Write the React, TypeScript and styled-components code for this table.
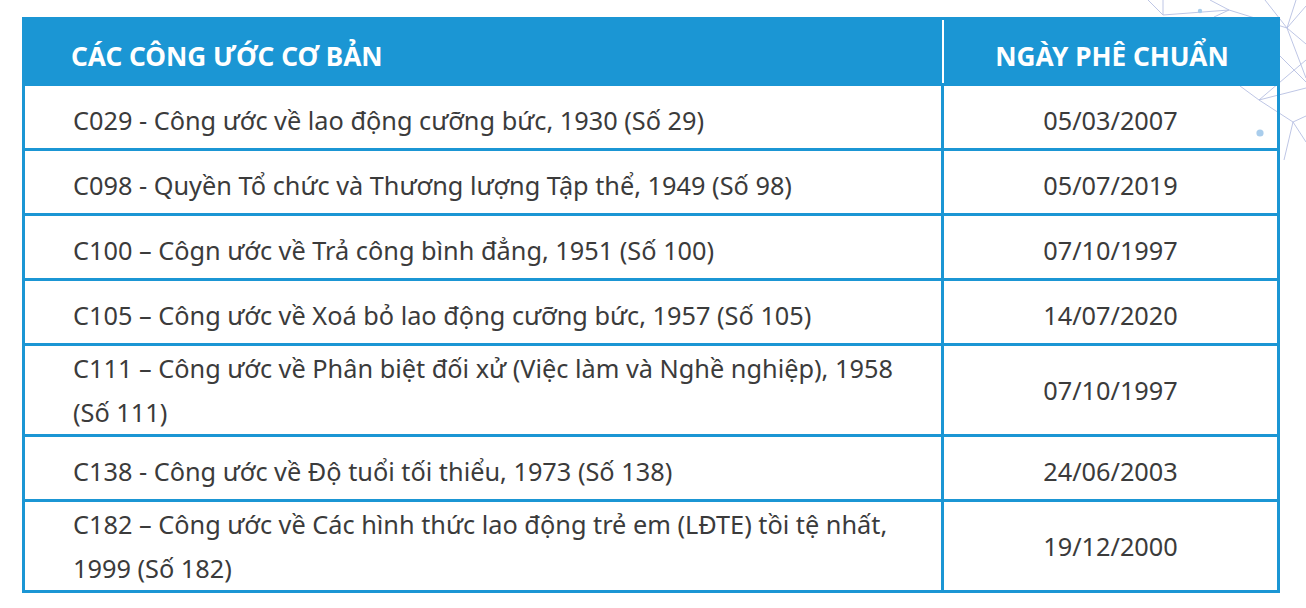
import styled, { createGlobalStyle } from 'styled-components';

const GlobalStyle = createGlobalStyle`
  html, body {
    margin: 0;
    padding: 0;
    background: #fff;
  }
  body {
    font-family: 'Noto Sans', 'Liberation Sans', sans-serif;
  }
  * {
    box-sizing: border-box;
  }
`;

const BLUE = '#1b96d4';

const Page = styled.div`
  position: relative;
  width: 1306px;
  height: 608px;
  overflow: hidden;
  padding: 17px 0 0 22px;
`;

const Network = styled.svg`
  position: absolute;
  top: 0;
  right: 0;
  width: 200px;
  height: 160px;
`;

const Table = styled.table`
  position: relative;
  width: 1258px;
  border-collapse: separate;
  border-spacing: 0;
  table-layout: fixed;
`;

const HeadCell = styled.th<{ $center?: boolean; $divider?: boolean }>`
  position: relative;
  height: 69px;
  padding: 8px 0 0 ${(p) => (p.$center ? '0' : '49px')};
  background: ${BLUE};
  color: #fff;
  font-size: 26.2px;
  font-weight: 700;
  text-align: ${(p) => (p.$center ? 'center' : 'left')};
  vertical-align: middle;

  &::after {
    content: '';
    display: ${(p) => (p.$divider ? 'block' : 'none')};
    position: absolute;
    top: 3px;
    bottom: 3px;
    right: 0;
    width: 2px;
    background: #fff;
  }
`;

const Cell = styled.td<{ $center?: boolean; $wrap?: boolean }>`
  height: 65px;
  padding: ${(p) => (p.$wrap ? '1px' : '8px')} ${(p) => (p.$center ? '0' : '30px')} 0
    ${(p) => (p.$center ? '0' : '48px')};
  border-bottom: 3px solid ${BLUE};
  border-right: 3px solid ${BLUE};
  color: #3b3b3b;
  font-size: 25.3px;
  line-height: 43.5px;
  text-align: ${(p) => (p.$center ? 'center' : 'left')};
  vertical-align: middle;

  &:first-child {
    border-left: 3px solid ${BLUE};
  }
`;

const rows = [
  { name: 'C029 - Công ước về lao động cưỡng bức, 1930 (Số 29)', date: '05/03/2007' },
  { name: 'C098 - Quyền Tổ chức và Thương lượng Tập thể, 1949 (Số 98)', date: '05/07/2019' },
  { name: 'C100 – Côgn ước về Trả công bình đẳng, 1951 (Số 100)', date: '07/10/1997' },
  { name: 'C105 – Công ước về Xoá bỏ lao động cưỡng bức, 1957 (Số 105)', date: '14/07/2020' },
  {
    name: 'C111 – Công ước về Phân biệt đối xử (Việc làm và Nghề nghiệp), 1958 (Số 111)',
    date: '07/10/1997',
    wrap: true,
  },
  { name: 'C138 - Công ước về Độ tuổi tối thiểu, 1973 (Số 138)', date: '24/06/2003' },
  {
    name: 'C182 – Công ước về Các hình thức lao động trẻ em (LĐTE) tồi tệ nhất, 1999 (Số 182)',
    date: '19/12/2000',
    wrap: true,
  },
];

const Decoration = () => (
  <Network viewBox="1106 0 200 160" aria-hidden>
    <g stroke="#b7c0e2" strokeWidth="0.9" fill="none">
      <path d="M1148 0 L1163 15 L1229 10 L1287 28" />
      <path d="M1163 0 L1163 15" />
      <path d="M1210 0 L1229 10 L1214 17" />
      <path d="M1265 0 L1287 28 L1306 6" />
      <path d="M1287 28 L1306 44" />
      <path d="M1287 28 L1296 0" />
      <path d="M1287 28 L1306 78" />
      <path d="M1277 53 L1306 82" />
      <path d="M1240 86 L1259 100 L1306 88" />
      <path d="M1259 100 L1293 122 L1306 116" />
      <path d="M1293 122 L1306 142" />
      <path d="M1293 122 L1284 160" />
      <path d="M1259 100 L1306 60" />
    </g>
    <circle cx="1200" cy="11" r="2.2" fill="#a9cdec" />
    <circle cx="1260" cy="133" r="3.6" fill="#a9cdec" />
  </Network>
);

const App = () => {
  return (
    <Page>
      <GlobalStyle />
      <Decoration />
      <Table>
        <colgroup>
          <col style={{ width: '922px' }} />
          <col style={{ width: '336px' }} />
        </colgroup>
        <thead>
          <tr>
            <HeadCell $divider>CÁC CÔNG ƯỚC CƠ BẢN</HeadCell>
            <HeadCell $center>NGÀY PHÊ CHUẨN</HeadCell>
          </tr>
        </thead>
        <tbody>
          {rows.map((r) => (
            <tr key={r.name}>
              <Cell $wrap={r.wrap}>{r.name}</Cell>
              <Cell $center $wrap={r.wrap}>
                {r.date}
              </Cell>
            </tr>
          ))}
        </tbody>
      </Table>
    </Page>
  );
};

export default App;
